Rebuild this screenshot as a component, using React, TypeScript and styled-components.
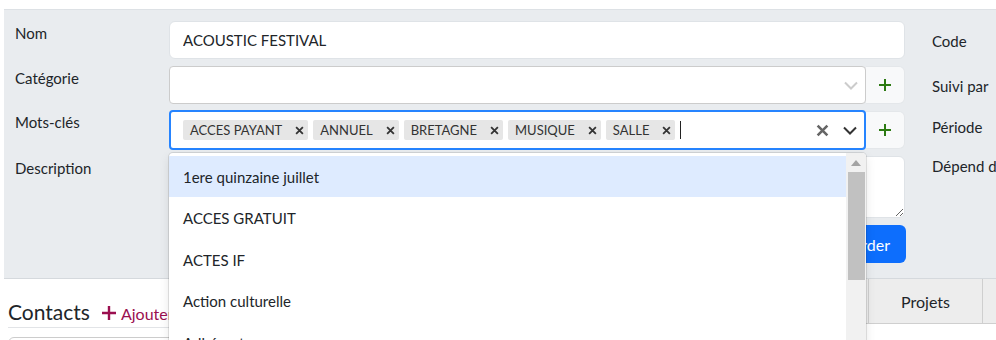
import React from 'react'
import styled, { createGlobalStyle } from 'styled-components'

const GlobalStyle = createGlobalStyle`
	html, body {
		margin: 0;
		padding: 0;
		background: #fff;
		overflow: hidden;
	}
	body {
		font-family: Lato, "Liberation Sans", sans-serif;
		font-size: 15px;
		color: #212529;
	}
	* {
		box-sizing: border-box;
	}
`

const Page = styled.div`
	width: 1140px;
	padding: 9px 0 0 4px;
`

const Panel = styled.section`
	display: flex;
	background: #e9ecef;
	border-top: 1px solid #dde1e5;
	border-bottom: 1px solid #d5d9dd;
	padding: 11px 0 15px 11px;
`

const FormGrid = styled.div`
	display: grid;
	grid-template-columns: 154px 736px;
	grid-template-rows: 39px 38px 40px 63px 38px;
	row-gap: 6px;
`

const Label = styled.label`
	line-height: 22px;
	padding-top: 1px;
	font-size: 15px;
`

const SideColumn = styled.div`
	display: flex;
	flex-direction: column;
	margin-left: 27px;
	white-space: nowrap;
`

const SideLabel = styled.div<{ $top: number }>`
	line-height: 22px;
	font-size: 15px;
	margin-top: ${(p) => p.$top}px;
`

const TextInput = styled.input`
	height: 38px;
	width: 100%;
	border: 1px solid #dfe3e7;
	border-radius: 6px;
	background: #fff;
	padding: 0 13px;
	font: inherit;
	color: #212529;
	outline: none;
`

const TextArea = styled.textarea`
	height: 62px;
	width: 100%;
	border: 1px solid #dfe3e7;
	border-radius: 6px;
	background: #fff;
	padding: 6px 13px;
	font: inherit;
	resize: vertical;
	outline: none;
`

const InputGroup = styled.div`
	display: flex;
	align-items: center;
	position: relative;
`

const Control = styled.div<{ $focused?: boolean }>`
	display: flex;
	align-items: center;
	width: 697px;
	height: ${(p) => (p.$focused ? 40 : 38)}px;
	background: #fff;
	border: ${(p) => (p.$focused ? '2px solid #2684ff' : '1px solid #cccccc')};
	border-radius: 4px;
`

const ValueContainer = styled.div<{ $focused?: boolean }>`
	flex: 1;
	display: flex;
	align-items: center;
	gap: 5px;
	padding-left: ${(p) => (p.$focused ? 12 : 13)}px;
	overflow: hidden;
`

const Tag = styled.span`
	display: inline-flex;
	align-items: center;
	height: 20px;
	background: #e6e6e6;
	border-radius: 2px;
	padding: 0 4px 0 7px;
	font-size: 13px;
	color: #333;
	white-space: nowrap;
`

const TagRemove = styled.span`
	display: inline-flex;
	align-items: center;
	margin-left: 13px;
`

const Caret = styled.span`
	width: 1px;
	height: 18px;
	background: #222;
`

const Indicator = styled.div<{ $w: number }>`
	width: ${(p) => p.$w}px;
	display: flex;
	align-items: center;
	justify-content: center;
`

const AddButton = styled.button`
	width: 39px;
	height: 38px;
	display: flex;
	align-items: center;
	justify-content: center;
	background: #f8f9fa;
	border: 1px solid #e4e7ea;
	border-left: none;
	border-radius: 0 6px 6px 0;
	padding: 0;
`

const ButtonRow = styled.div`
	grid-column: 2;
	display: flex;
	justify-content: flex-end;
`

const SaveButton = styled.button`
	height: 38px;
	padding: 0 16px;
	margin-right: -1px;
	background: #0d6efd;
	color: #fff;
	border: none;
	border-radius: 6px;
	font: inherit;
	font-size: 16px;
`

const Menu = styled.div`
	position: absolute;
	top: 43px;
	left: 0;
	width: 697px;
	height: 200px;
	background: #fff;
	border-radius: 4px 4px 0 0;
	box-shadow: 0 0 0 1px rgba(0, 0, 0, 0.1), 0 4px 11px rgba(0, 0, 0, 0.1);
	display: flex;
	overflow: hidden;
	z-index: 10;
`

const OptionList = styled.div`
	flex: 1;
	padding-top: 3px;
`

const Option = styled.div<{ $active?: boolean }>`
	height: 41.4px;
	line-height: 19px;
	padding: 12px 14px 10px;
	font-size: 15px;
	color: #212529;
	background: ${(p) => (p.$active ? '#deebff' : '#fff')};
	white-space: nowrap;
`

const ScrollTrack = styled.div`
	width: 20px;
	background: #f1f1f1;
	display: flex;
	flex-direction: column;
	align-items: center;
	padding: 0 2px;
`

const ScrollArrow = styled.div`
	height: 19px;
	display: flex;
	align-items: center;
	justify-content: center;
`

const ScrollThumb = styled.div`
	width: 17px;
	height: 108px;
	background: #c1c1c1;
`

const Bottom = styled.div`
	display: flex;
`

const ContactsCol = styled.div`
	width: 637px;
	padding-left: 4px;
`

const SectionHead = styled.div`
	display: flex;
	align-items: baseline;
	gap: 12px;
	margin-top: 20px;
	padding-bottom: 3px;
	border-bottom: 1px solid #e2e4e7;
`

const SectionTitle = styled.h2`
	margin: 0;
	font-size: 21px;
	font-weight: 400;
	line-height: 25px;
	color: #212529;
`

const AddLink = styled.span`
	display: inline-flex;
	align-items: baseline;
	gap: 5px;
	color: #9b0f4f;
	font-size: 16px;
`

const ContactCard = styled.div`
	margin-top: 9px;
	height: 40px;
	border: 1px solid #ccc;
	border-radius: 6px;
`

const TabsCol = styled.div`
	flex: 1;
`

const TabBar = styled.div`
	display: flex;
	height: 45px;
	border-bottom: 1px solid #cfcfcf;
	background: #fff;
`

const Tab = styled.div`
	width: 114px;
	display: flex;
	align-items: center;
	justify-content: center;
	background: #ededed;
	border-right: 1px solid #cfcfcf;
	font-size: 16px;
	color: #212529;
`

const Cross = ({ size, color, width }: { size: number; color: string; width: number }) => (
	<svg width={size} height={size} viewBox="0 0 12 12">
		<path d="M1.5 1.5 L10.5 10.5 M10.5 1.5 L1.5 10.5" stroke={color} strokeWidth={width} />
	</svg>
)

const Chevron = ({ color }: { color: string }) => (
	<svg width="14" height="9" viewBox="0 0 14 9">
		<path d="M1 1.5 L7 7.5 L13 1.5" fill="none" stroke={color} strokeWidth="2" />
	</svg>
)

const Plus = () => (
	<svg width="12" height="12" viewBox="0 0 12 12">
		<path d="M6 0 V12 M0 6 H12" stroke="#2c7a12" strokeWidth="2" />
	</svg>
)

const tags = ['ACCES PAYANT', 'ANNUEL', 'BRETAGNE', 'MUSIQUE', 'SALLE']
const options = ['1ere quinzaine juillet', 'ACCES GRATUIT', 'ACTES IF', 'Action culturelle', 'Adhérents']

export default function App() {
	return (
		<Page>
			<GlobalStyle />
			<Panel>
				<FormGrid>
					<Label>Nom</Label>
					<TextInput defaultValue="ACOUSTIC FESTIVAL" />

					<Label>Catégorie</Label>
					<InputGroup>
						<Control>
							<ValueContainer />
							<Indicator $w={29}>
								<Chevron color="#cccccc" />
							</Indicator>
						</Control>
						<AddButton>
							<Plus />
						</AddButton>
					</InputGroup>

					<Label>Mots-clés</Label>
					<InputGroup>
						<Control $focused>
							<ValueContainer $focused>
								{tags.map((t) => (
									<Tag key={t}>
										{t}
										<TagRemove>
											<Cross size={9} color="#333" width={2.4} />
										</TagRemove>
									</Tag>
								))}
								<Caret />
							</ValueContainer>
							<Indicator $w={26}>
								<Cross size={13} color="#666" width={2.4} />
							</Indicator>
							<Indicator $w={29}>
								<Chevron color="#333" />
							</Indicator>
						</Control>
						<AddButton>
							<Plus />
						</AddButton>
						<Menu>
							<OptionList>
								{options.map((o, i) => (
									<Option key={o} $active={i === 0}>
										{o}
									</Option>
								))}
							</OptionList>
							<ScrollTrack>
								<ScrollArrow>
									<svg width="10" height="6" viewBox="0 0 10 6">
										<path d="M0 6 L5 0 L10 6 Z" fill="#a3a3a3" />
									</svg>
								</ScrollArrow>
								<ScrollThumb />
							</ScrollTrack>
						</Menu>
					</InputGroup>

					<Label>Description</Label>
					<TextArea />

					<ButtonRow>
						<SaveButton>Sauvegarder</SaveButton>
					</ButtonRow>
				</FormGrid>
				<SideColumn>
					<SideLabel $top={9}>Code</SideLabel>
					<SideLabel $top={23}>Suivi par</SideLabel>
					<SideLabel $top={19}>Période</SideLabel>
					<SideLabel $top={17}>Dépend de</SideLabel>
				</SideColumn>
			</Panel>
			<Bottom>
				<ContactsCol>
					<SectionHead>
						<SectionTitle>Contacts</SectionTitle>
						<AddLink>
							<svg width="14" height="14" viewBox="0 0 14 14">
								<path d="M7 0 V14 M0 7 H14" stroke="#9b0f4f" strokeWidth="2.4" />
							</svg>
							Ajouter
						</AddLink>
					</SectionHead>
					<ContactCard />
				</ContactsCol>
				<TabsCol>
					<TabBar>
						<Tab>Tâches</Tab>
						<Tab>Documents</Tab>
						<Tab>Projets</Tab>
						<Tab>Historique</Tab>
					</TabBar>
				</TabsCol>
			</Bottom>
		</Page>
	)
}
